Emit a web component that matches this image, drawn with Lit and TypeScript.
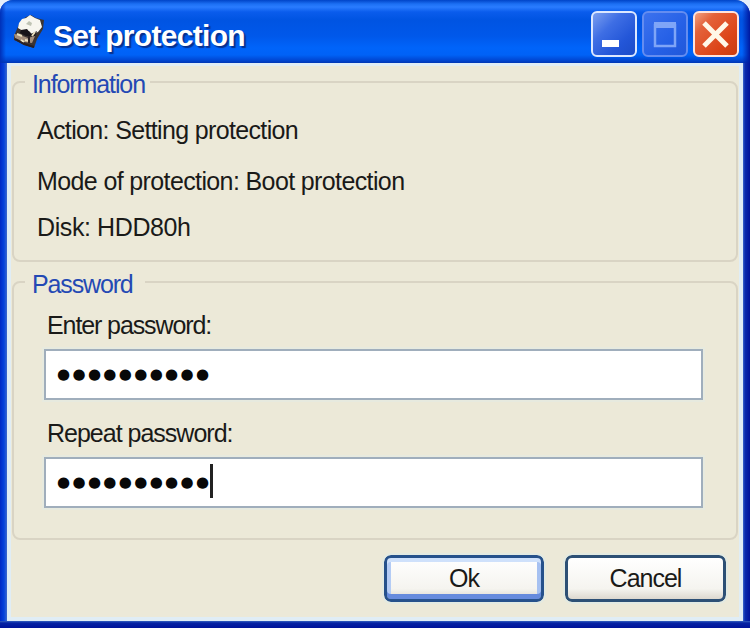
import { LitElement, html, css, svg } from "lit";
import { customElement, property } from "lit/decorators.js";

@customElement("xp-group")
class XpGroup extends LitElement {
  @property() heading = "";
  static styles = css`
    :host { display: block; }
    .box {
      box-sizing: border-box; height: 100%; margin: 0; padding: 0;
      border: 2px solid #d9d4c4; border-radius: 8px; min-width: 0;
    }
    legend {
      margin-left: 11px; height: 30px; line-height: 34px;
      font-size: 25px; color: #2449b4; white-space: nowrap;
    }
    .info { letter-spacing: -1.1px; padding: 0 5px 0 7px; }
    .pass { letter-spacing: -1.15px; padding: 0 12px 0 7px; }
  `;
  render() {
    return html`<fieldset class="box">
      <legend class=${this.heading === "Password" ? "pass" : "info"}>${this.heading}</legend>
      <slot></slot>
    </fieldset>`;
  }
}

@customElement("app-root")
class AppRoot extends LitElement {
  static styles = css`
    :host {
      display: block; width: 750px; height: 628px; overflow: hidden; background: #e4eefb;
      font-family: "Liberation Sans", Arial, sans-serif; font-size: 25px; color: #1a1a18;
    }
    .window {
      box-sizing: border-box; width: 750px; height: 628px; padding: 0 7px 7px;
      display: flex; flex-direction: column; border-radius: 13px 15px 0 0;
      background: linear-gradient(90deg, #0029c4 0, #0543dc 4px, #3c68cc 7px, #3c68cc 743px, #0a2cae 745px, #00139a 750px);
      position: relative; overflow: hidden;
    }
    .edge { position: absolute; left: 0; right: 0; bottom: 0; height: 7px; background: linear-gradient(#3560c0, #0623a4 2px, #00139a); }
    .titlebar {
      box-sizing: border-box; height: 63px; flex: none; margin: 0 -7px; padding: 8px 11px 0 12px; display: flex; align-items: flex-start;
      background:
        linear-gradient(90deg, #0030b8 0, #0030b800 6px, #0020a000 742px, #0018a0 750px),
        linear-gradient(#0044c8 0, #1c70f4 4px, #2a7cff 7px, #0a5cec 12px, #0054e2 20px, #0058ea 36px, #0064fa 48px, #0062f6 55px, #0048d4 60px, #0036b4 63px);
    }
    .drive { width: 34px; height: 36px; margin-top: 6px; flex: none; }
    .title {
      margin: 6px auto 0 7px; font-size: 30px; line-height: 44px; font-weight: bold; color: #fff;
      letter-spacing: -0.7px; white-space: nowrap; text-shadow: 2px 2px 1px #06318f;
    }
    .controls { display: flex; gap: 5px; margin-top: 3px; }
    .ctl { box-sizing: border-box; width: 46px; height: 46px; border-radius: 6px; border: 2px solid #dce8ff; }
    .ctl svg { display: block; width: 42px; height: 42px; }
    .min { background: linear-gradient(135deg, #7b9ff0 0, #3e6ee4 35%, #2356d8 70%, #1c4cc8); }
    .max { background: linear-gradient(135deg, #3c72ee, #2560e6 60%, #2158da); border-color: #648df0; }
    .close { background: linear-gradient(135deg, #f0a080 0, #e4623a 25%, #dc4418 70%, #c83c10); border-color: #ffe3dc; }
    .client {
      box-sizing: border-box; flex: 1; background: #ece9d8; padding: 1px 1px 0 1px;
      border: 4px solid #e0edf5; border-top-width: 3px;
    }
    .first { height: 195px; }
    .second { height: 273px; margin-top: 5px; }
    .lines { padding: 18px 0 0 23px; white-space: nowrap; }
    .line { height: 30px; line-height: 30px; }
    .l1 { letter-spacing: -0.65px; margin-bottom: 21px; }
    .l2 { letter-spacing: -0.62px; margin-bottom: 16px; }
    .l3 { letter-spacing: -0.4px; }
    .fields { padding: 13px 33px 0 30px; }
    .label { height: 30px; line-height: 30px; padding-left: 3px; white-space: nowrap; }
    .f1 { letter-spacing: -1.1px; }
    .f2 { letter-spacing: -1px; margin-top: 18px; }
    .input {
      box-sizing: border-box; height: 51px; margin-top: 9px; background: #fff; border: 2px solid #a0aebc;
      display: flex; align-items: center; padding-left: 11px; outline: 2px solid #e7eadf;
    }
    .dots { font: 15px/34px "DejaVu Sans", sans-serif; letter-spacing: 2.35px; color: #080808; margin-top: -2px; }
    .caret { width: 3px; height: 34px; margin: 0 0 4px -1px; background: #222; }
    .actions { display: flex; justify-content: flex-end; gap: 21px; padding: 15px 12px 0 0; }
    .btn {
      box-sizing: border-box; height: 47px; border: 3px solid #2d5075; border-radius: 7px;
      background: linear-gradient(#fff, #f5f4ef 75%, #dcd8cf); display: flex; align-items: center; justify-content: center;
      outline: 2px solid #e3eae2;
    }
    .ok { width: 160px; border-color: #26518b; letter-spacing: -1px; box-shadow: inset 0 4px #cfe1fb, inset 0 -5px #668bdd, inset 4px 0 #b4ccf5, inset -4px 0 #a6c1f1; }
    .cancel { width: 161px; letter-spacing: -1px; }
  `;

  private drive = svg`
    <path d="M2 22 5 15 8 8 14 3 19 1 24 4 32 6 31 15 25 25 22 34 13 31 2 26Z" fill="#3b3433"/>
    <path d="M7 9 10 5 14 4 18 1 23 4 28 6 30 13 26 18 20 20 17 17 11 17 6 14Z" fill="#f7f6ef"/>
    <path d="M14 10 17 7 20 9 19 12Z" fill="#bfc3b4"/>
    <path d="M9 16 15 15 19 20 25 17 23 22 14 22 8 19Z" fill="#171318"/>
    <path d="M2 20 8 21 16 24 23 22 20 29 12 28 3 24Z" fill="#a58f7c"/>
    <path d="M5 20 10 22M13 26 18 27M20 22 23 18M9 26 12 28" stroke="#eadfbd" stroke-width="2"/>
    <path d="M3 25 12 30 22 33M17 22 17 29" stroke="#292023" stroke-width="2" fill="none"/>`;

  render() {
    return html`<div class="window">
      <div class="titlebar">
        <svg class="drive" viewBox="0 0 34 36">${this.drive}</svg>
        <div class="title">Set protection</div>
        <div class="controls">
          <div class="ctl min"><svg viewBox="0 0 42 42"><rect x="9" y="27" width="17" height="7" fill="#fff"/></svg></div>
          <div class="ctl max"><svg viewBox="0 0 42 42"><path d="M11 12H31V33H11Z" fill="none" stroke="#7fa5f7" stroke-width="2.5"/><path d="M10 12H32" stroke="#7fa5f7" stroke-width="6"/></svg></div>
          <div class="ctl close"><svg viewBox="0 0 42 42"><path d="M9 10 32 33M32 10 9 33" stroke="#fff8e8" stroke-width="5"/></svg></div>
        </div>
      </div>
      <div class="client">
        <xp-group class="first" heading="Information">
          <div class="lines">
            <div class="line l1">Action: Setting protection</div>
            <div class="line l2">Mode of protection: Boot protection</div>
            <div class="line l3">Disk: HDD80h</div>
          </div>
        </xp-group>
        <xp-group class="second" heading="Password">
          <div class="fields">
            <div class="label f1">Enter password:</div>
            <div class="input"><span class="dots">●●●●●●●●●●</span></div>
            <div class="label f2">Repeat password:</div>
            <div class="input"><span class="dots">●●●●●●●●●●</span><span class="caret"></span></div>
          </div>
        </xp-group>
        <div class="actions">
          <div class="btn ok">Ok</div>
          <div class="btn cancel">Cancel</div>
        </div>
      </div>
      <div class="edge"></div>
    </div>`;
  }
}
